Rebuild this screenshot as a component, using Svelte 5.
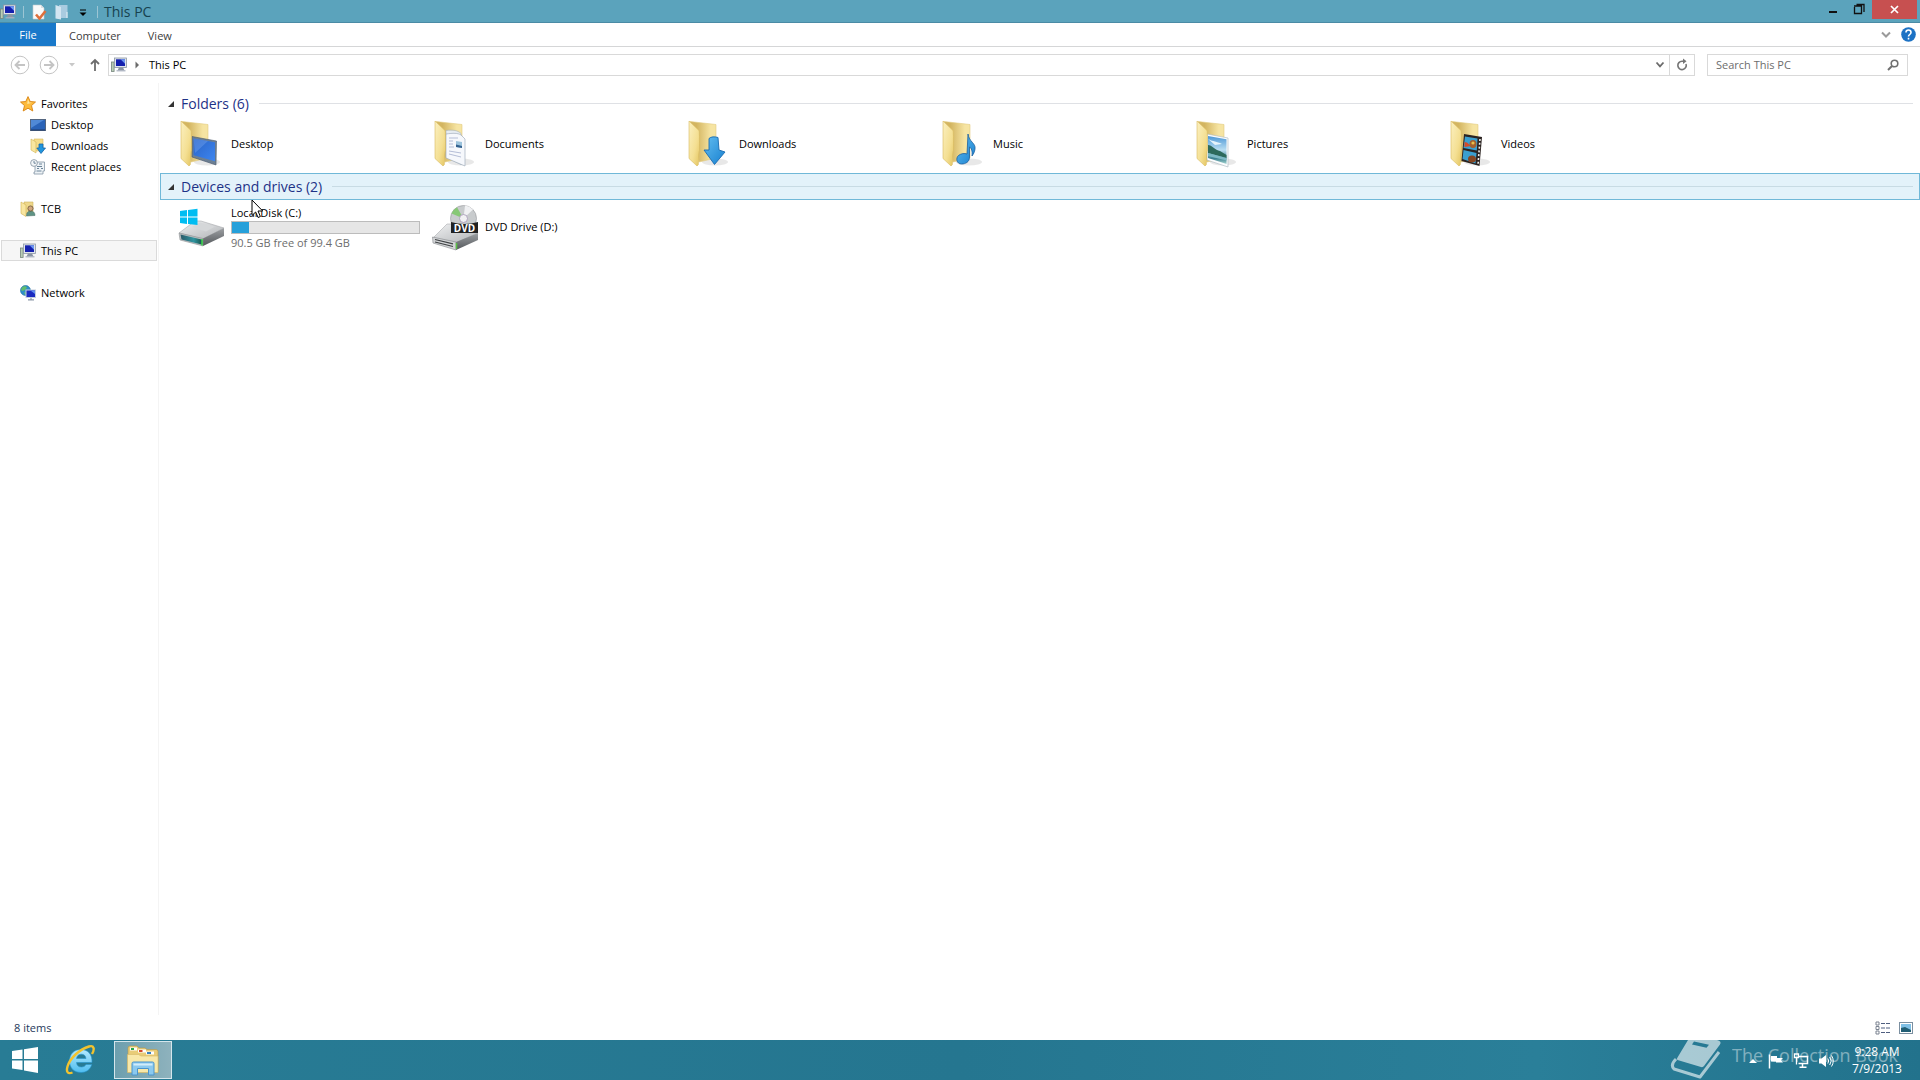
<script>
  const favorites = [
    { label: 'Desktop', icon: 'screen' },
    { label: 'Downloads', icon: 'downloads' },
    { label: 'Recent places', icon: 'recent' }
  ];
  const folders = ['Desktop', 'Documents', 'Downloads', 'Music', 'Pictures', 'Videos'];
  const disk = { name: 'Local Disk (C:)', total: 99.4, free: 90.5 };
  const used = ((disk.total - disk.free) / disk.total) * 100;
</script>

{#snippet pc()}
  <svg class="i16" viewBox="0 0 16 16" aria-hidden="true">
    <rect x="0.5" y="5" width="2.6" height="9.5" fill="#b9cdb6" stroke="#76867e" stroke-width=".8" />
    <rect x="3.5" y="1" width="12" height="9.500" fill="#dfe4ec" stroke="#8b96a4" stroke-width=".8" />
    <rect x="5" y="2.300" width="9" height="6.700" fill="#1420ae" />
    <path d="M9.500 2.300H14v4.400z" fill="#6d97f2" />
    <path d="M8 10.500h4l1.500 3h-7z" fill="#8b95a5" /><path d="M5.500 13.800h9" stroke="#aab2c0" stroke-width="1.200" />
  </svg>
{/snippet}

{#snippet navIcon(kind)}
  <svg class="i16" viewBox="0 0 16 16" aria-hidden="true">
    {#if kind === 'star'}
      <path d="M8 .6l2.200 4.900 5.300.5-4 3.600 1.300 5.400L8 12.200l-4.800 2.800 1.300-5.400-4-3.600 5.300-.5z" fill="#fdbb3b" stroke="#d98312" stroke-width=".9" />
      <path d="M8 3l1.200 3.400 3 .4-5 1.200z" fill="#ffe7a1" />
    {:else if kind === 'screen'}
      <rect x="0.500" y="2.500" width="15" height="11" fill="#2a63b8" stroke="#546680" />
      <path d="M1 3h13L1 11z" fill="#5089d6" /><path d="M1 13h14" stroke="#1e3a6b" />
    {:else if kind === 'downloads'}
      <path d="M4 1h9v12H4z" fill="#f5dd8b" stroke="#d8b95a" stroke-width=".6" />
      <path d="M1 1l5 3v11l-5-3z" fill="#f8e6a0" stroke="#d2b152" stroke-width=".6" />
      <path d="M9 6h4v4h2.500L11 15.500 6.800 10H9z" fill="#2196dd" stroke="#1565ab" stroke-width=".8" />
    {:else if kind === 'recent'}
      <path d="M5 3h9.500v9H13v3H4v-2h1z" fill="#edf2f6" stroke="#8495a5" stroke-width=".8" />
      <circle cx="4" cy="4" r="3.400" fill="#f3f6f8" stroke="#8d9ba8" stroke-width=".9" />
      <path d="M4 2v2.200h1.800M9 5h3M7 7.500h5M7 9.500h2M11 9.500h2M6.500 12h5" stroke="#5d788f" stroke-width=".9" fill="none" />
    {:else if kind === 'user'}
      <path d="M4 1h9v12H4z" fill="#eed78a" stroke="#cfb35a" stroke-width=".6" />
      <path d="M1 1l5 3v11.500l-5-3z" fill="#f8e6a0" stroke="#d2b152" stroke-width=".6" />
      <path d="M6.500 15c0-4 2-5 4-5s4.500 1 4.500 4.500z" fill="#5f9384" stroke="#456d63" stroke-width=".5" />
      <circle cx="10.500" cy="7.500" r="2.600" fill="#d0a67c" stroke="#6c5338" stroke-width=".8" />
    {:else if kind === 'network'}
      <circle cx="5.500" cy="5.500" r="5" fill="#2f8fc8" stroke="#1b6d9d" stroke-width=".6" />
      <path d="M2 2.500c2-2 4-1.500 5 0L5 5 2.500 6 1 5zM4 7l2.500 1L5 10z" fill="#62bd6d" />
      <rect x="6" y="5" width="9.500" height="7.500" fill="#1b2bc0" stroke="#c5cfdd" />
      <path d="M10.500 5.500H15V9z" fill="#5f8cf0" /><path d="M8 14.800h6M11 13v2" stroke="#8d99a9" stroke-width="1.200" />
    {/if}
  </svg>
{/snippet}

{#snippet folderIcon(kind)}
  <svg class="i48" viewBox="0 0 48 48" aria-hidden="true">
    <ellipse cx="29" cy="42" rx="13" ry="3.500" fill="#000" opacity=".09" />
    <path d="M4 1.500L30 4.500V38L13 42z" fill="url(#fBack)" stroke="#e3cb80" stroke-width=".6" />
    {#if kind === 'Desktop'}
      <path d="M14 16.500L38.500 21l-.5 24-24-8z" fill="#6c7f93" stroke="#48586b" stroke-width=".6" />
      <path d="M15.500 18.500L37 22.300v19L15.500 35.300z" fill="url(#scr)" />
      <path d="M15.500 18.500L30 21 17 33z" fill="#8fbaf7" opacity=".3" />
    {:else if kind === 'Documents'}
      <path d="M14 10.500c7-1 12 0 15 3v31L14 37z" fill="#e6ecf2" stroke="#a5b1bd" stroke-width=".6" />
      <path d="M14 14c7-1 12-1 15 1l4 4v27L14 38z" fill="#f6f8fc" stroke="#95a2b1" stroke-width=".6" />
      <path d="M17 18h9M17 21h4M17 24h4M17 27h5M17 31l12 2M17 34l12 3" stroke="#b4bdd6" stroke-width="1" />
      <path d="M24 21l6 1v6l-6-1z" fill="#9cc3dc" /><path d="M24 24.500l6 1.500v2l-6-1z" fill="#34628f" />
    {:else if kind === 'Downloads'}
      <path d="M23 18.500c2-2 6-2 9-1L33 30l6 2-10.500 12.500L18 30h5z" fill="url(#arr)" stroke="#1a6bb0" stroke-width=".9" />
    {:else if kind === 'Music'}
      <path d="M28 14c1 8 8 9 7 15-.4 3-1.500 5-3 7 .5-5-.5-8-2.500-9v10c0 5-4 7-8 7-5 0-6-6-3-8.500 2.500-2 6-2.500 8.500-1.500z" fill="url(#arr)" stroke="#1d5f9d" stroke-width=".8" />
    {:else if kind === 'Pictures'}
      <path d="M13 14l21 4v29l-21-7z" fill="#fbfcfd" stroke="#a9b7c0" stroke-width=".6" />
      <path d="M14 16l18.500 3.300V44L14 38z" fill="url(#sky)" />
      <path d="M14 25c4 0 7 5 12 6l6.500 4v3L14 33z" fill="#2d6a5c" /><path d="M14 19c6 3 8 2 14 5l-7 1z" fill="#e5f3fb" />
      <path d="M14 33l18.500 5v2.500L14 36z" fill="#7db9c4" />
    {:else if kind === 'Videos'}
      <path d="M16 14l18 3-2.500 29-18-5z" fill="#2b2321" />
      <path d="M17 16.500l12.500 2-.7 12L15.500 28zM15.500 30l13 3-1 10.500L14.500 39z" fill="#3b9fcf" />
      <path d="M16.500 22c4 0 4 3 7 4l-7 1z" fill="#d64b2a" />
      <ellipse cx="25" cy="24" rx="3.500" ry="4" fill="#a5602d" /><circle cx="25" cy="23" r="1.600" fill="#e7c04d" />
      <ellipse cx="24" cy="39" rx="4" ry="3.500" fill="#854622" />
      <path d="M32 19l-2 26" stroke="#f1efec" stroke-width="1.600" stroke-dasharray="2 1.800" />
    {/if}
    <path d="M3 1l10 9.500c.6 1 .5 18 .5 20-1.200 1.500-.8 13-1.200 14.200L11 46l-8-7.500z" fill="url(#fFront)" stroke="#d9bb60" stroke-width=".6" />
  </svg>
{/snippet}

<svg class="defs" aria-hidden="true">
  <defs>
    <linearGradient id="fFront" x1="0" y1="0" x2="1" y2="1"><stop offset="0" stop-color="#fbf0c0" /><stop offset=".6" stop-color="#f4df92" /><stop offset="1" stop-color="#e3c45f" /></linearGradient>
    <linearGradient id="fBack" x1="0" y1="0" x2="1" y2="0"><stop offset=".25" stop-color="#d3b561" /><stop offset=".8" stop-color="#f6e4a2" /></linearGradient>
    <linearGradient id="scr" x1="0" y1="0" x2="1" y2="1"><stop offset="0" stop-color="#2a63c6" /><stop offset="1" stop-color="#3d86f0" /></linearGradient>
    <linearGradient id="arr" x1="0" y1="0" x2="1" y2="1"><stop offset="0" stop-color="#63bdf0" /><stop offset="1" stop-color="#1780d0" /></linearGradient>
    <linearGradient id="sky" x1="0" y1="0" x2="0" y2="1"><stop offset="0" stop-color="#4c97d6" /><stop offset=".5" stop-color="#b9def2" /><stop offset=".8" stop-color="#3d8190" /><stop offset="1" stop-color="#a8d7d3" /></linearGradient>
    <linearGradient id="metal" x1="0" y1="0" x2="1" y2="1"><stop offset="0" stop-color="#f0f1f2" /><stop offset="1" stop-color="#b0b3b6" /></linearGradient>
    <linearGradient id="side" x1="0" y1="0" x2="0" y2="1"><stop offset="0" stop-color="#9da0a3" /><stop offset="1" stop-color="#54585c" /></linearGradient>
    <linearGradient id="teal" x1="0" y1="0" x2="1" y2="0"><stop offset="0" stop-color="#2b5a68" /><stop offset=".6" stop-color="#2f94a0" /><stop offset="1" stop-color="#1a5146" /></linearGradient>
    <linearGradient id="ie" x1="0" y1="0" x2="0" y2="1"><stop offset="0" stop-color="#b4eafe" /><stop offset="1" stop-color="#4fbdf0" /></linearGradient>
  </defs>
</svg>

<div class="window">
  <header class="titlebar">
    <div class="quick">
      {@render pc()}
      <i class="sep"></i>
      <button aria-label="Properties"><svg class="i16" viewBox="0 0 16 16"><path d="M2 1h8l3 3v11H2z" fill="#fafafa" stroke="#c5ccd0" stroke-width=".6" /><path d="M10 1v3h3" fill="#d9dfe2" /><path d="M5 10.500l3.500 4L14.500 7" stroke="#dd6f3c" stroke-width="2.600" fill="none" /></svg></button>
      <button aria-label="New folder"><svg class="i16" viewBox="0 0 16 16"><path d="M5 1h8.500v13H5z" fill="#a9cbe0" /><path d="M1.500 1l5.500 2v12.500l-5.500-1z" fill="#d3e5f1" /><path d="M13 8v6" stroke="#e4f0f6" /></svg></button>
      <button class="narrow" aria-label="Customize Quick Access Toolbar"><svg class="i8" viewBox="0 0 8 8"><path d="M1 1h6" stroke="#000" /><path d="M0.500 3.500h7L4 7z" fill="#000" /></svg></button>
      <i class="sep"></i>
    </div>
    <h1>This PC</h1>
    <div class="controls">
      <button aria-label="Minimize"><svg width="26" height="20" viewBox="0 0 26 20"><path d="M9 12h8" stroke="#111" stroke-width="2" /></svg></button>
      <button aria-label="Restore"><svg width="26" height="20" viewBox="0 0 26 20"><path d="M8.500 7v6.500h7V6h-7M8 6h8M10.500 4.500H18V12" stroke="#111" stroke-width="1.300" fill="none" /></svg></button>
      <button class="close" aria-label="Close"><svg width="45" height="19" viewBox="0 0 45 19"><path d="M19 6l7 7M26 6l-7 7" stroke="#fff" stroke-width="1.700" /></svg></button>
    </div>
  </header>

  <nav class="ribbon" aria-label="Ribbon">
    <button class="file">File</button>
    <button>Computer</button>
    <button>View</button>
    <div class="ribbon-end">
      <button aria-label="Expand the Ribbon"><svg width="10" height="8" viewBox="0 0 10 8"><path d="M1 1.500L5 5.500 9 1.500" stroke="#9a9a9a" stroke-width="2" fill="none" /></svg></button>
      <button aria-label="Help"><svg width="15" height="15" viewBox="0 0 15 15"><circle cx="7.500" cy="7.500" r="7.300" fill="#1c72c4" /><path d="M5 5.500c0-3.300 5-3.300 5 0 0 2-2.500 2-2.500 4M7.500 10.800v1.600" stroke="#fff" stroke-width="1.600" fill="none" /></svg></button>
    </div>
  </nav>

  <div class="address-row">
    <div class="history">
      <button aria-label="Back"><svg width="20" height="20" viewBox="0 0 20 20"><circle cx="10" cy="10" r="8.800" fill="none" stroke="#c4c4c4" /><path d="M15 10H6M9.500 6L5.500 10l4 4" stroke="#c4c4c4" stroke-width="1.800" fill="none" /></svg></button>
      <button aria-label="Forward"><svg width="20" height="20" viewBox="0 0 20 20"><circle cx="10" cy="10" r="8.800" fill="none" stroke="#c4c4c4" /><path d="M5 10h9M10.500 6l4 4-4 4" stroke="#c4c4c4" stroke-width="1.800" fill="none" /></svg></button>
      <button aria-label="Recent locations"><svg width="8" height="6" viewBox="0 0 8 6"><path d="M1 1h6L4 4.500z" fill="#c8c8c8" /></svg></button>
      <button aria-label="Up"><svg width="10" height="14" viewBox="0 0 10 14"><path d="M5 13V2M1 6l4-4 4 4" stroke="#6d6d6d" stroke-width="1.800" fill="none" /></svg></button>
    </div>
    <div class="address">
      {@render pc()}
      <svg class="i8" viewBox="0 0 8 8" aria-hidden="true"><path d="M2.500 0.500v7L6 4z" fill="#6b6b6b" /></svg>
      <button class="crumb">This PC</button>
      <button class="drop" aria-label="Previous locations"><svg width="10" height="8" viewBox="0 0 10 8"><path d="M1.500 1.500L5 5.300 8.500 1.500" stroke="#6b6b6b" stroke-width="1.800" fill="none" /></svg></button>
      <button class="refresh" aria-label="Refresh"><svg width="14" height="14" viewBox="0 0 14 14"><path d="M11 6A4.200 4.200 0 1 1 7 3.200h2" stroke="#757575" stroke-width="1.600" fill="none" /><path d="M8 .5l3.500 2.700L8 6z" fill="#757575" /></svg></button>
    </div>
    <label class="search">
      <input type="search" placeholder="Search This PC" aria-label="Search This PC" />
      <svg width="12" height="12" viewBox="0 0 12 12" aria-hidden="true"><circle cx="7.500" cy="4.500" r="3.300" fill="none" stroke="#6f6f6f" stroke-width="1.600" /><path d="M5 7L1 11" stroke="#6f6f6f" stroke-width="2" /></svg>
    </label>
  </div>

  <div class="body">
    <nav class="side" aria-label="Navigation">
      <div class="group">
        <button>{@render navIcon('star')}Favorites</button>
        {#each favorites as f}
          <button class="child">{@render navIcon(f.icon)}{f.label}</button>
        {/each}
      </div>
      <div class="group"><button>{@render navIcon('user')}TCB</button></div>
      <div class="group"><button class="current">{@render pc()}This PC</button></div>
      <div class="group"><button>{@render navIcon('network')}Network</button></div>
    </nav>

    <main>
      <section>
        <button class="heading"><svg class="i8" viewBox="0 0 8 8"><path d="M7 1v6H1z" fill="#333" /></svg><span>Folders (6)</span><i></i></button>
        <div class="tiles">
          {#each folders as name}
            <button class="tile">{@render folderIcon(name)}<span>{name}</span></button>
          {/each}
        </div>
      </section>
      <section class="devices">
        <button class="heading hot"><svg class="i8" viewBox="0 0 8 8"><path d="M7 1v6H1z" fill="#333" /></svg><span>Devices and drives (2)</span><i></i></button>
        <div class="tiles">
          <button class="tile">
            <svg class="i48" viewBox="0 0 48 48" aria-hidden="true">
              <path d="M1 30l16-12h6l23 7L25 36z" fill="url(#metal)" stroke="#9c9fa2" stroke-width=".5" />
              <path d="M14 24l8-4.500 15 4-9 5z" fill="#d5d7d9" />
              <path d="M25 35.500L46 25v8L25 43z" fill="url(#side)" />
              <path d="M1 30l24 5.500V43L2 37z" fill="#b9bdbf" stroke="#85888b" stroke-width=".5" />
              <path d="M2.500 31.500l22 5.200v5L3.500 36.500z" fill="url(#teal)" /><path d="M24 36v6.500" stroke="#3ee04b" stroke-width="1.400" />
              <path d="M2 8l7-.9v6.400H2zM10 7l9.500-1.200v7.700H10zM2 14.500h7v6.400l-7-.9zM10 14.500h9.500V22L10 21z" fill="#00bdf2" />
            </svg>
            <span class="drive">
              <span>{disk.name}</span>
              <span class="meter"><span style:width="{used}%"></span></span>
              <span class="free">{disk.free} GB free of {disk.total} GB</span>
            </span>
          </button>
          <button class="tile">
            <svg class="i48" viewBox="0 0 48 48" aria-hidden="true">
              <path d="M1 35l14-14h8l23 9-22 10z" fill="url(#metal)" stroke="#9c9fa2" stroke-width=".5" />
              <path d="M24 39l22-9v7l-22 10z" fill="url(#side)" />
              <path d="M.5 34L24 39v8L1 40z" fill="#d3d5d7" stroke="#85888b" stroke-width=".6" />
              <path d="M3 36.500l18 4.300M3 39l18 4.500" stroke="#3e4143" stroke-width="1.200" /><path d="M24.500 40v6" stroke="#59c244" stroke-width="1.500" />
              <circle cx="31.500" cy="15.500" r="13" fill="#c8cbcd" stroke="#939699" stroke-width=".6" />
              <path d="M31.500 15.500L19.500 10.500A13 13 0 0 1 25 4.300z" fill="#87c876" /><path d="M31.500 15.500L33 2.500A13 13 0 0 1 41 6.500z" fill="#f0f1f3" />
              <circle cx="31.500" cy="15.500" r="4" fill="#f1f1f3" stroke="#a395b5" stroke-width=".8" />
              <path d="M19 19q13 4 27 0v11H19z" fill="#202122" />
              <text x="32.500" y="29" text-anchor="middle">DVD</text>
            </svg>
            <span>DVD Drive (D:)</span>
          </button>
        </div>
        <svg class="cursor" width="13" height="20" viewBox="0 0 13 20" aria-hidden="true"><path d="M1 1v15.500l3.600-3.500 2.500 5.500 2.300-1L7 12h4.700z" fill="#fff" stroke="#000" /></svg>
      </section>
    </main>
  </div>

  <div class="status">
    <span>8 items</span>
    <div class="views">
      <button aria-label="Details view"><svg width="16" height="14" viewBox="0 0 16 14"><path d="M1 1h3v3H1zM1 5.500h3v3H1zM1 10h3v3H1z" fill="none" stroke="#7a8290" /><path d="M6 2.500h4M11 2.500h4M6 7h4M11 7h4M6 11.500h4M11 11.500h4" stroke="#4f5f80" /></svg></button>
      <button aria-label="Large thumbnails view"><svg width="14" height="12" viewBox="0 0 14 12"><rect x=".5" y=".5" width="13" height="11" fill="#fff" stroke="#7b8fa0" /><rect x="2" y="2" width="10" height="8" fill="#7fc0e6" /><path d="M2 6l4-1 6 3v2H2z" fill="#215e74" /></svg></button>
    </div>
  </div>

  <footer class="taskbar">
    <button class="start" aria-label="Start"><svg width="28" height="26" viewBox="0 0 28 26"><path d="M1 4l10.500-1.500V12H1zM13 2.300L27 0v12H13zM1 13.500h10.500V23L1 21.500zM13 13.500h14V26l-14-2.500z" fill="#fff" /></svg></button>
    <button class="ie" aria-label="Internet Explorer"><svg width="32" height="32" viewBox="0 0 32 32">
      <path fill-rule="evenodd" d="M17 5.500c7 0 11.500 5 11 13H12.500c.3 3 2 4.500 5 4.500 2 0 3.500-.8 4.500-2.500h5.800c-1.500 5-5.300 8-10.800 8C10 28.500 5.500 24 5.500 17S10 5.500 17 5.500zm-4.500 9H22c-.3-2.800-2-4.300-4.700-4.300s-4.300 1.500-4.800 4.300z" fill="url(#ie)" stroke="#2794cb" stroke-width=".6" />
      <path d="M28 10c3-5 2-9-3-7.500C16 5 6 14 3.500 22.500c-1.500 5 0 8 5 6" fill="none" stroke="#f2c32f" stroke-width="2.400" />
    </svg></button>
    <button class="task-active" aria-label="File Explorer"><svg width="34" height="32" viewBox="0 0 34 32">
      <path d="M2 4q0-2 2-2h7l2 2h6l2 1.500h9q2 0 2 2V28H2z" fill="#e8cc78" stroke="#b6974b" stroke-width=".6" />
      <path d="M4 3.500h7v3H4z" fill="#fff" /><path d="M5 4h3v2H5z" fill="#25a84a" />
      <path d="M12 5.500h8v3h-8z" fill="#fff" /><path d="M13 6h3.500v2H13z" fill="#d3492b" />
      <path d="M20 7.500h8v3h-8z" fill="#fff" /><path d="M21 8h4v2h-4z" fill="#3780bf" />
      <path d="M1.500 10.500h11L15 12h17v16.500H1.500z" fill="#f8e8a9" stroke="#d6b866" stroke-width=".6" />
      <path d="M6 31V19.500q0-1.500 1.500-1.500h19q1.500 0 1.500 1.500V31h-5.500v-6.500h-11V31z" fill="#8bc9ef" stroke="#4b94cd" />
      <path d="M7.500 19.500h19v2h-19z" fill="#d2ecfb" />
    </svg></button>
    <div class="tray">
      <button aria-label="Show hidden icons"><svg width="8" height="6" viewBox="0 0 8 6"><path d="M0 5l4-4 4 4z" fill="#fff" /></svg></button>
      <button aria-label="Action Center"><svg width="16" height="16" viewBox="0 0 16 16"><path d="M1.500 1.500v14" stroke="#fff" stroke-width="1.500" /><path d="M3 3h6v2h6l-2 2 2 2.500H8v-1H3z" fill="#fff" /></svg></button>
      <button aria-label="Network"><svg width="16" height="16" viewBox="0 0 16 16"><path d="M6 3.500h8.500v7H5.500M9.500 11v3M6.500 14.300h7" stroke="#fff" stroke-width="1.500" fill="none" /><path d="M1.500 1v3.500h4V1zM3.500 4.500v7" stroke="#fff" stroke-width="1.300" fill="none" /></svg></button>
      <button aria-label="Volume"><svg width="16" height="16" viewBox="0 0 16 16"><path d="M1 5.500h2.500L8 2v12l-4.500-3.500H1z" fill="#fff" /><path d="M9.800 5.500q1.800 2.500 0 5M11.700 4q3 4 0 8M13.500 2.500q3.500 5.500 0 11" stroke="#fff" fill="none" /></svg></button>
      <button class="clock"><time>9:28 AM</time><span>7/9/2013</span></button>
    </div>
    <div class="mark">
      <svg width="52" height="40" viewBox="0 0 52 40" aria-hidden="true">
        <path fill-rule="evenodd" d="M18 0H47Q52 1 50 4.500L34 26q-1 1.500-3 1L7.500 20Q6 19 7.500 17.500zM24 1.500L22 4.500l14.500 3.200L39 4.700z" fill="#fff" />
        <path d="M6 19Q0 25 4 29L30 37 49 12" fill="none" stroke="#fff" stroke-width="3" stroke-linejoin="round" />
      </svg>
      <span>The Collection Book</span>
    </div>
  </footer>
</div>

<style>
  :global(body) { margin: 0; }
  .window {
    display: flex; flex-direction: column; min-height: 100vh; background: #fff;
    font-family: "Open Sans", "Noto Sans", sans-serif; font-size: 11px; line-height: 16px; color: #000;
  }
  button { font: inherit; color: inherit; background: none; border: 0; padding: 0; margin: 0; display: flex; align-items: center; text-align: left; }
  svg { display: block; flex: none; }
  .defs { position: absolute; width: 0; height: 0; }
  .i16 { width: 16px; height: 16px; }
  .i48 { width: 48px; height: 48px; }
  .i8 { width: 8px; height: 8px; }
  .i48 text { font: bold 10px "Open Sans", sans-serif; fill: #fff; }

  .titlebar { display: flex; height: 23px; background: #5ba3bc; box-shadow: inset 0 -1px #4a8ba5; }
  .quick { display: flex; align-items: center; gap: 7px; }
  .quick .sep { width: 1px; height: 12px; background: #9cc5d4; }
  .quick .narrow { margin: 3px 3px 0 2px; }
  h1 { margin: 0 0 0 6px; font-size: 14px; line-height: 24px; font-weight: 400; color: #17424f; }
  .controls { margin-left: auto; display: flex; align-items: flex-start; padding-right: 3px; }
  .close { background: #c75050; }

  .ribbon { display: flex; height: 23px; border-bottom: 1px solid #d5d6d7; color: #3d3d3d; }
  .ribbon > button { padding: 2px 14px 0 13px; }
  .ribbon .file { width: 56px; padding: 1px 0 0; justify-content: center; background: #1979ca; color: #fff; }
  .ribbon-end { margin-left: auto; display: flex; align-items: center; gap: 10px; padding-right: 4px; }

  .address-row { display: flex; align-items: center; height: 36px; padding-right: 12px; }
  .history { display: flex; align-items: center; width: 98px; padding-left: 10px; gap: 9px; }
  .history button:nth-child(4) { margin-left: 5px; }
  .address { display: flex; flex: 1; align-items: center; height: 20px; border: 1px solid #d9d9d9; padding-left: 2px; }
  .address .i8 { margin: 0 8px 0 6px; }
  .address .drop { margin-left: auto; width: 18px; justify-content: center; }
  .address .refresh { width: 25px; height: 20px; justify-content: center; border-left: 1px solid #d9d9d9; }
  .search { display: flex; align-items: center; width: 183px; height: 20px; margin-left: 12px; border: 1px solid #d9d9d9; padding: 0 8px; }
  .search input { flex: 1; min-width: 0; border: 0; padding: 0; outline: 0; background: none; font: inherit; color: #000; }
  .search input::placeholder { color: #6d6d6d; opacity: 1; }

  .body { display: flex; flex: 1; }
  .side { width: 159px; padding: 10px 0 0 1px; box-sizing: border-box; border-right: 1px solid #f4f4f4; }
  .group { margin-bottom: 21px; }
  .side button { width: 156px; height: 21px; gap: 5px; padding-left: 18px; border: 1px solid transparent; box-sizing: border-box; }
  .side .child { padding-left: 28px; }
  .side .current { background: #f6f6f6; border-color: #dadada; }

  main { flex: 1; min-width: 0; padding: 7px 0 0 1px; }
  .heading { width: 100%; height: 27px; padding: 0 6px; box-sizing: border-box; border: 1px solid transparent; font-size: 14px; line-height: 20px; color: #1e3287; }
  .heading span { margin: 0 10px 0 6px; }
  .heading i { flex: 1; height: 1px; background: #dfe1e5; }
  .hot { background: #e3f2fa; border-color: #70b8d8; }
  .hot i { background: #c8dbe4; }
  .devices { position: relative; margin-top: 2px; }
  .tiles { display: grid; grid-template-columns: repeat(auto-fill, 254px); padding-left: 18px; }
  .tile { height: 54px; gap: 5px; }
  .drive { display: flex; flex-direction: column; line-height: 17px; color: #000; }
  .meter { width: 187px; height: 11px; border: 1px solid #bcbcbc; background: #e6e6e6; }
  .meter span { display: block; height: 100%; background: #26a0da; }
  .free { color: #6d6d6d; }
  .cursor { position: absolute; left: 91px; top: 26px; }

  .status { display: flex; align-items: center; height: 24px; padding: 1px 7px 0 14px; color: #1e395b; }
  .views { display: flex; align-items: center; gap: 8px; margin-left: auto; }

  .taskbar { position: relative; display: flex; height: 40px; background: linear-gradient(90deg, #287c95, #257690 50%, #2a7f99 80%, #22728c); color: #fff; }
  .start { width: 56px; padding-left: 11px; box-sizing: border-box; }
  .ie { width: 58px; padding-left: 8px; box-sizing: border-box; }
  .task-active { width: 58px; height: 38px; margin-top: 1px; justify-content: center; box-sizing: border-box; border: 1px solid #d5e6ec; background: linear-gradient(90deg, #6d9fae, #8eb2bd); }
  .tray { display: flex; align-items: center; margin-left: auto; padding-right: 17px; gap: 9px; }
  .tray > button { margin-top: 2px; }
  .tray > button:first-child { margin-right: 2px; }
  .tray .clock { width: 52px; margin: 0 0 0 8px; flex-direction: column; font-size: 12px; line-height: 17px; justify-content: center; }
  .mark { position: absolute; right: 22px; top: 0; display: flex; align-items: center; gap: 10px; opacity: .6; pointer-events: none; }
  .mark span { font-size: 18px; line-height: 24px; opacity: .7; padding-bottom: 10px; }
</style>
